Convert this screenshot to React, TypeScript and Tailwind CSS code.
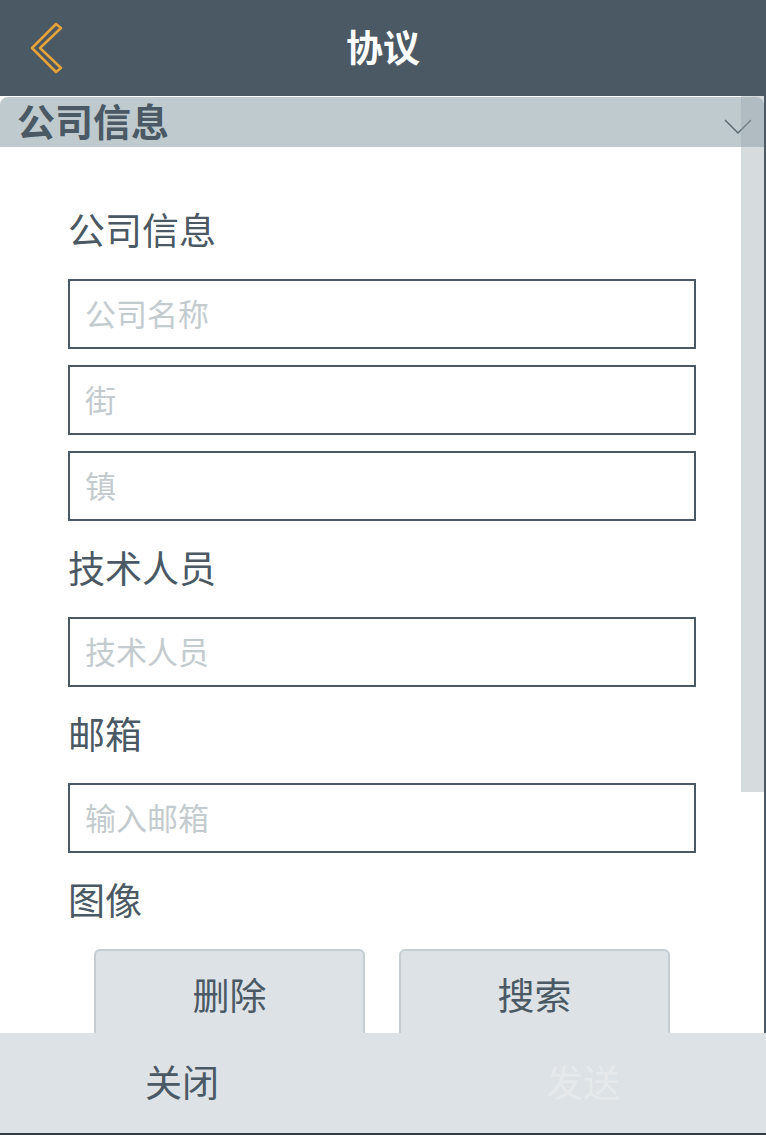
import React from "react";

const font = { fontFamily: '"Noto Sans CJK SC", "Noto Sans", sans-serif' };

const Field = ({ placeholder }: { placeholder: string }) => (
  <input
    placeholder={placeholder}
    className="block w-[628px] h-[70px] border-2 border-[#4a5964] bg-white px-[15px] pb-[4px] text-[31px] text-[#4a5964] placeholder:text-[#c4cbce] outline-none"
    style={font}
  />
);

const Label = ({ children }: { children: React.ReactNode }) => (
  <div className="h-[64px] flex items-center text-[37px] leading-tight text-[#4a5964]">
    <span className="-mt-[3px]">{children}</span>
  </div>
);

export default function App() {
  return (
    <div className="w-[766px] h-[1135px] flex flex-col bg-white overflow-hidden" style={font}>
      {/* top bar */}
      <div className="relative h-[96px] shrink-0 bg-[#4a5964] flex items-center justify-center">
        <button className="absolute left-[26px] top-[20px] w-[40px] h-[56px]">
          <svg width="40" height="56" viewBox="0 0 40 56">
            <path
              d="M30 4 L35 8 L14 28 L35 48 L30 52 L6 28 Z"
              fill="none"
              stroke="#e8a23a"
              strokeWidth="2.5"
              strokeLinejoin="round"
            />
          </svg>
        </button>
        <h1 className="text-[37px] font-bold text-white leading-tight -mt-[4px]">协议</h1>
      </div>

      {/* scroll area */}
      <div className="relative flex-1 min-h-0 overflow-hidden border-r-2 border-[#4a5964]">
        <div className="h-[50px] mt-px bg-[#bfcacf] rounded-t-lg flex items-center justify-between pl-[17px] pr-[12px] pb-[5px]">
          <span className="text-[38px] font-bold text-[#4a5964] leading-[1.1]">公司信息</span>
          <svg width="28" height="16" viewBox="0 0 28 16" className="mt-[14px]">
            <path d="M1 1 L14 14 L27 1" fill="none" stroke="#5c6a72" strokeWidth="1.5" />
          </svg>
        </div>

        <div className="pl-[68px] pt-[52px] flex flex-col gap-[16px]">
          <Label>公司信息</Label>
          <Field placeholder="公司名称" />
          <Field placeholder="街" />
          <Field placeholder="镇" />
          <Label>技术人员</Label>
          <Field placeholder="技术人员" />
          <Label>邮箱</Label>
          <Field placeholder="输入邮箱" />
          <Label>图像</Label>
          <div className="w-[628px] px-[26px] flex gap-[34px]">
            <button className="flex-1 h-[120px] bg-[#dde2e6] border-2 border-[#c5cdd1] rounded-t-md flex justify-center pt-[25px] text-[37px] leading-none text-[#4a5964]">
              删除
            </button>
            <button className="flex-1 h-[120px] bg-[#dde2e6] border-2 border-[#c5cdd1] rounded-t-md flex justify-center pt-[25px] text-[37px] leading-none text-[#4a5964]">
              搜索
            </button>
          </div>
        </div>

        {/* scrollbar */}
        <div className="absolute right-0 top-0 w-[23px] h-[696px] bg-[rgba(155,167,174,0.41)]" />
      </div>

      {/* footer */}
      <div className="h-[102px] shrink-0 bg-[#dde2e6] border-b-2 border-[#333a40] flex items-center pb-[4px]">
        <button className="w-[364px] text-[37px] leading-tight text-[#4a5964]">关闭</button>
        <button className="ml-[36px] flex-1 text-[37px] leading-tight text-[#e6e9eb]">发送</button>
      </div>
    </div>
  );
}
